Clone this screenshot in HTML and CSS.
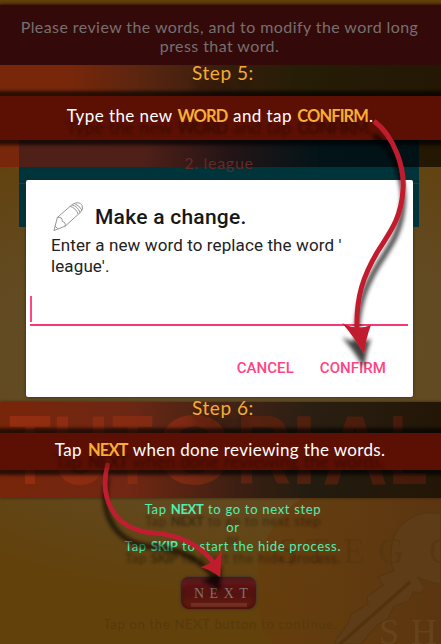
FILE: index.html
```html
<!DOCTYPE html>
<html lang="en">
<head>
<meta charset="utf-8">
<title>Tutorial - Review words</title>
<link rel="stylesheet" href="styles.css">
</head>
<body>
<div class="screen">
  <svg class="backdrop" viewBox="0 0 441 644" aria-hidden="true">
    <defs><linearGradient id="orb"><stop offset="0" stop-color="#673d0e" stop-opacity=".75"/><stop offset="1" stop-color="#5b3510"/></linearGradient></defs>
    <path d="M302 498C247 535 246 607 272 644H441V498Z" fill="url(#orb)"/>
    <path d="M441 514C416 508 390 526 391 554Q390 564 394 571L388 573 378 577 383 585 367 597 368 604 351 614 349 622 335 641V644H361L378 624 388 619 394 606 409 601 413 592 420 593 425 588 417 577Q427 582 441 584Z" fill="#5d3c17" stroke="#553711" stroke-width="1.2"/>
    <path d="M410 582L340 644" stroke="#53320f" stroke-width="3.5"/>
    <g class="seal" font-size="36"><text x="278" y="563">S</text><text x="306" y="563">T</text><text x="343" y="563">E</text><text x="378" y="563">G</text><text x="429" y="563">O</text><text class="light" x="379" y="644">S</text><text class="light" x="411" y="644">H</text></g>
  </svg>

  <header class="notice"><span class="l1">Please review the words, and to modify the word long</span><span class="l2">press that word.</span></header>

  <section class="step step-five">
    <h2>Step 5:</h2>
    <p class="bar"><span>Type the new <b>WORD</b> and tap <b>CONFIRM</b>.</span></p>
  </section>

  <div class="words">
    <div class="row"><span>2. league</span></div>
    <div class="row next-row"></div>
    <div class="tail"></div>
    <div class="dialog">
      <div class="dialog-title">
        <svg class="pencil" width="32" height="32" viewBox="0 0 32 32" fill="none" stroke="#929292" stroke-width="1">
          <path d="M1 30.500L4.500 17 20 3.500Q27-.500 30 4.500 32 8 28 12L12.500 26ZM4.500 17Q10 16 9.500 21 13.500 22 12.500 26M17.500 5.500Q23.500 7 26 13.500M19.500 4Q25.500 5.500 28 12M22 2.500Q27 4.500 30 9.500M2 26L5 28.500"/>
        </svg>
        <h1>Make a change.</h1>
      </div>
      <p class="message">Enter a new word to replace the word '<br>league'.</p>
      <div class="field"><i class="caret"></i></div>
      <div class="actions"><span>CANCEL</span><span>CONFIRM</span></div>
    </div>
  </div>

  <section class="step step-six">
    <svg class="tutorial" viewBox="0 0 441 95" aria-hidden="true">
      <defs><linearGradient id="word" x1="0" x2="441" y1="0" y2="0" gradientUnits="userSpaceOnUse"><stop stop-color="#962e10"/><stop offset=".4" stop-color="#7e2a13"/><stop offset=".6" stop-color="#54210f"/><stop offset="1" stop-color="#43190a"/></linearGradient></defs>
      <g class="title" fill="url(#word)"><text x="9" y="82" textLength="42" lengthAdjust="spacingAndGlyphs">T</text><text x="52" y="82" textLength="57" lengthAdjust="spacingAndGlyphs">U</text><text x="112" y="82" textLength="41" lengthAdjust="spacingAndGlyphs">T</text><text x="156" y="82" textLength="77" lengthAdjust="spacingAndGlyphs">O</text><text x="236" y="82" textLength="55" lengthAdjust="spacingAndGlyphs">R</text><text x="291" y="82" textLength="26" lengthAdjust="spacingAndGlyphs">I</text><text x="322" y="82" textLength="66" lengthAdjust="spacingAndGlyphs">A</text><text x="389" y="82" textLength="39" lengthAdjust="spacingAndGlyphs">L</text></g></svg>
    <h2>Step 6:</h2>
    <p class="bar"><span>Tap <b>NEXT</b> when done reviewing the words.</span></p>
  </section>

  <footer>
    <div class="hint"><span>Tap <b>NEXT</b> to go to next step</span><span>or</span><span>Tap <b>SKIP</b> to start the hide process.</span></div>
    <div class="next">NEXT</div>
    <p class="continue">Tap on the NEXT button to continue.</p>
  </footer>

  <svg class="arrows" viewBox="0 0 441 644" aria-hidden="true">
    <defs>
      <filter id="shadow" x="-30%" y="-30%" width="160%" height="160%"><feDropShadow dx="0" dy="14" stdDeviation="2" flood-color="#000" flood-opacity=".75"/></filter>
      <linearGradient id="fade" x1="0" y1="460" x2="0" y2="475" gradientUnits="userSpaceOnUse"><stop stop-color="#c21f30" stop-opacity=".4"/><stop offset="1" stop-color="#c21f30"/></linearGradient>
    </defs>
    <g filter="url(#shadow)">
      <path d="M374 121C395 137 405 169 403 190C401 219 390 232 378 251C363 276 356 297 357 329" fill="none" stroke="#c01d2f" stroke-width="5"/>
      <path d="M342 323Q357 331 371 325Q366 338 364 354Q355 338 342 323Z" fill="#c01d2f"/>
    </g>
    <g filter="url(#shadow)">
      <path d="M108 463C99 495 111 530 154 533C184 535 202 548 214 563" fill="none" stroke="url(#fade)" stroke-width="4.500"/>
      <path d="M201 567Q217 563 222 548Q221 562 220 577Q211 570 201 567Z" fill="#c01d2f"/>
    </g>
  </svg>
</div>
</body>
</html>
```
FILE: styles.css
```css
* { box-sizing: border-box; }
body, h1, h2, p { margin: 0; font-weight: 400; }
body { overflow: hidden; }
.screen {
  position: relative;
  width: 441px;
  height: 644px;
  padding-top: 4px;
  overflow: hidden;
  display: flex;
  flex-direction: column;
  font-family: Lato, "Liberation Sans", sans-serif;
  white-space: nowrap;
  background: radial-gradient(ellipse 420px 250px at 230px 350px, #66522a 0, #624a22 55%, rgba(98, 65, 11, 0) 100%), #62410b;
}
.backdrop, .arrows { position: absolute; left: 0; top: 0; width: 441px; height: 644px; }
.arrows { z-index: 5; }
.seal { fill: #573710; font-family: "Liberation Serif", serif; opacity: .8; }
.seal .light { fill: #674620; }

.notice {
  height: 61px;
  padding-top: 12px;
  display: flex;
  flex-direction: column;
  align-items: center;
  background: #340909;
  color: #747070;
  font-size: 16px;
  line-height: 19px;
  position: relative;
  border-top: 1px solid #45200b;
  box-shadow: 0 0 3px #340909;
}
.notice .l1, .notice .l2 { letter-spacing: .42px; margin-right: 2px; }

.step { position: relative; }
.step h2 {
  color: #f5ab34;
  font-size: 19px;
  letter-spacing: .55px;
  text-align: center;
  text-indent: 5px;
  text-shadow: 0 11px 4px rgba(0, 0, 0, .3);
}
.bar {
  position: relative;
  display: flex;
  justify-content: center;
  background: #5c1003;
  color: #fff;
  font-size: 17px;
  letter-spacing: .42px;
  box-shadow: 0 0 3px 5px rgba(0, 0, 0, .65);
  text-shadow: 0 12px 3px rgba(0, 0, 0, .35);
}
.bar b { color: #f8ad35; font-weight: 700; font-size: 16.500px; letter-spacing: -.9px; margin: 0 .9px 0 .5px; }
.step-five { height: 75px; background: linear-gradient(90deg, #78270a 0, #78270a 70px, #562510 150px, #351d0b 230px, #261d06 300px, #241704 441px); z-index: 1; }
.step-five h2 { height: 31px; line-height: 15px; }
.step-five .bar { height: 44px; line-height: 40px; padding-right: 1px; }

.words {
  position: relative;
  height: 262px;
  background: linear-gradient(90deg, #78270a 0, #78270a 20px, #241704 419px) 0 0 / 441px 27px no-repeat;
}
.row {
  width: 400px;
  height: 44px;
  margin-left: 19px;
  border-bottom: 1px solid #2c3d27;
  background: linear-gradient(90deg, #4f2017 0, #4e2018 125px, #241416 210px, #031418 300px, #011216 400px) 0 0 / 400px 27px no-repeat, #00343b;
  color: #5d2d29;
  font-size: 16px;
  line-height: 46px;
  letter-spacing: .7px;
  text-align: center;
}
.next-row { height: 43px; border: 0; background: #00333b; }
.tail { height: 175px; }
.dialog {
  position: absolute;
  left: 26px;
  top: 40px;
  width: 387px;
  height: 217px;
  padding-top: 21px;
  border-radius: 2px;
  background: #fff;
  box-shadow: 0 0 3px #302611;
  font-family: Roboto, sans-serif;
  color: #222;
}
.dialog-title { display: flex; height: 32px; padding-left: 27px; }
.pencil { width: 31px; height: 31px; }
.dialog h1 { margin-left: 11px; font-size: 21px; letter-spacing: .25px; line-height: 32px; font-weight: 500; color: #171717; }
.message { margin-top: 2px; padding-left: 25px; font-size: 17px; letter-spacing: .11px; line-height: 20.500px; }
.field { width: 378px; height: 50px; margin: 0 0 0 4px; border-bottom: 2px solid #f63873; padding-top: 20px; }
.caret { display: block; width: 2px; height: 26px; background: #ff4586; }
.actions { display: flex; justify-content: flex-end; gap: 26px; padding: 31px 27px 0; color: #ff4383; font-size: 15px; letter-spacing: .05px; line-height: 22px; font-weight: 500; }

.step-six {
  height: 96px;
  background: radial-gradient(ellipse at 55% 0, rgba(74, 42, 26, .3), transparent 55%), linear-gradient(90deg, #78250a 0, #702713 130px, #3b1f12 240px, #221c10 310px, #241606 441px);
  box-shadow: 0 0 3px #392611;
}
.step-six h2 { height: 31px; line-height: 12px; position: relative; }
.step-six .bar { height: 37px; line-height: 34px; letter-spacing: .34px; padding-right: 1px; }
.step-six .bar b { margin-left: 1.5px; }
.tutorial { position: absolute; left: 0; top: 0; width: 441px; height: 95px; }
.title { font: 700 98px "Liberation Sans", sans-serif; }

footer { position: relative; display: flex; flex-direction: column; align-items: center; }
.hint {
  display: flex;
  flex-direction: column;
  align-items: center;
  margin-top: 2px;
  padding-left: 25px;
  color: #52eeb3;
  font-size: 13px;
  letter-spacing: .69px;
  line-height: 18.300px;
  text-shadow: 0 12px 3px rgba(0, 0, 0, .4);
}
.hint b { letter-spacing: -.3px; margin-right: .5px; }
.next {
  width: 75px;
  height: 32px;
  margin: 22px 4px 0 0;
  border-radius: 8px;
  padding-left: 13px;
  background: linear-gradient(90deg, transparent 10px, rgba(190, 120, 110, .24) 10px, rgba(190, 120, 110, .24) 66px, transparent 66px) 0 26px / 100% 4px no-repeat, linear-gradient(#390407, #5d1013 20%, #54130f 55%, #651c10);
  box-shadow: 0 0 2px 1px #493526, inset 0 5px 5px rgba(145, 105, 100, .25), inset 0 0 5px #300306;
  color: #80706d;
  font: 400 14px/34px "Liberation Serif", serif;
  letter-spacing: 5.500px;
}
.continue { margin-top: 6px; color: #57390c; font-size: 13px; letter-spacing: .7px; line-height: 18px; }
```
